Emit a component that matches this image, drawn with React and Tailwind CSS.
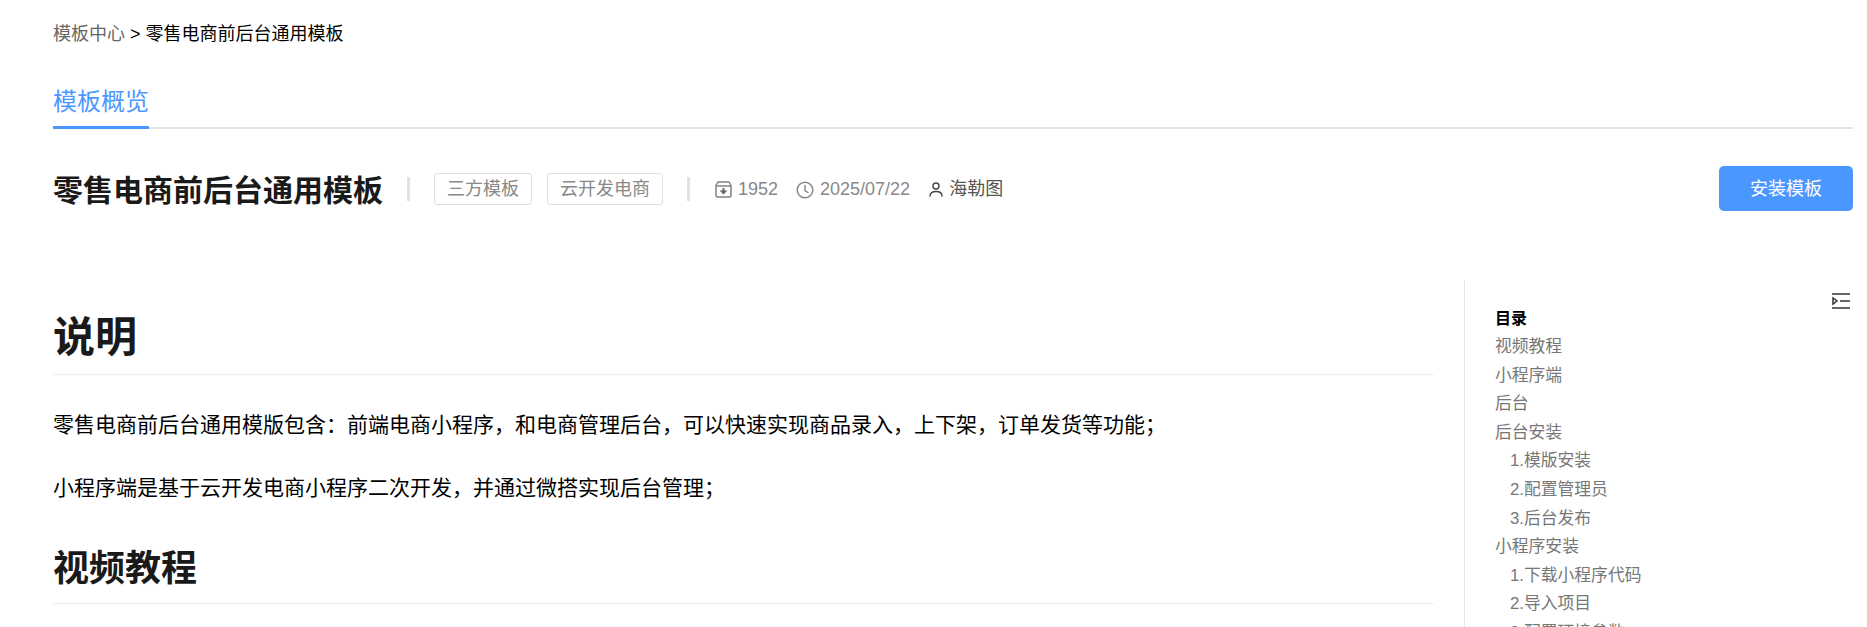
const font = { fontFamily: '"Liberation Sans", "Noto Sans CJK SC", sans-serif' };

const toc = [
  { t: "视频教程" },
  { t: "小程序端" },
  { t: "后台" },
  { t: "后台安装" },
  { t: "1.模版安装", sub: true },
  { t: "2.配置管理员", sub: true },
  { t: "3.后台发布", sub: true },
  { t: "小程序安装" },
  { t: "1.下载小程序代码", sub: true },
  { t: "2.导入项目", sub: true },
  { t: "3.配置环境参数", sub: true },
];

function ArchiveIcon() {
  return (
    <svg width="17" height="17" viewBox="0 0 17 17" fill="none" stroke="#808080" strokeWidth="1.500">
      <path d="M3 1h11l2 3.500V14.500a1.500 1.500 0 0 1-1.500 1.500h-12A1.500 1.500 0 0 1 1 14.500V4.500z" strokeLinejoin="round" />
      <path d="M1 5h15" />
      <path d="M8.500 7v3" strokeWidth="2.500" />
      <path d="M4.500 9.500h8l-4 4z" fill="#666" stroke="none" />
    </svg>
  );
}

function ClockIcon() {
  return (
    <svg width="18" height="18" viewBox="0 0 18 18" fill="none" stroke="#888" strokeWidth="1.500">
      <circle cx="9" cy="9" r="7.800" />
      <path d="M9 4.500V9.500l3 2" strokeLinecap="round" />
    </svg>
  );
}

function UserIcon() {
  return (
    <svg width="14" height="15" viewBox="0 0 14 15" fill="none" stroke="#444" strokeWidth="1.400">
      <circle cx="7" cy="4" r="3" />
      <path d="M1 14c0-3 2.500-4.500 6-4.500s6 1.500 6 4.500" strokeLinecap="round" />
    </svg>
  );
}

function TocIcon() {
  return (
    <svg width="18" height="16" viewBox="0 0 18 16" fill="none" stroke="#333" strokeWidth="1.300">
      <path d="M0 1h18M0 15h18" />
      <path d="M1 5l4 3-4 3z" strokeWidth="1.500" />
      <path d="M8 8h10" strokeWidth="1.500" />
    </svg>
  );
}

export default function App() {
  return (
    <div style={font} className="h-[627px] overflow-hidden bg-white pl-[53px] pr-[14px]">
      {/* Breadcrumb */}
      <div className="pt-[20px] h-[46px] text-[18px] leading-[28px] text-black">
        <span className="text-[#666]">模板中心</span> &gt; 零售电商前后台通用模板
      </div>

      {/* Tab bar */}
      <div className="mt-[10px] h-[73px] flex items-end border-b-2 border-[#e4e4e4]">
        <div className="h-[73px] -mb-[2px] border-b-[3px] border-[#4a98ff] pt-[26px] text-[24px] leading-[40px] text-[#4a98ff]">
          模板概览
        </div>
      </div>

      {/* Template header */}
      <div className="mt-[37px] h-[45px] flex items-center">
        <h1 className="h-[45px] text-[30px] leading-[49px] font-bold text-[#1a1a1a]">零售电商前后台通用模板</h1>
        <div className="ml-[24px] w-[3px] h-[24px] bg-[#e2e2e2]" />
        <span className="ml-[24px] w-[98px] h-[32px] flex items-center justify-center rounded-[3px] border border-[#dcdfe6] pt-[2px] text-[18px] text-[#888]">
          三方模板
        </span>
        <span className="ml-[15px] w-[116px] h-[32px] flex items-center justify-center rounded-[3px] border border-[#dcdfe6] pt-[2px] text-[18px] text-[#888]">
          云开发电商
        </span>
        <div className="ml-[24px] w-[3px] h-[24px] bg-[#e2e2e2]" />
        <div className="ml-[25px] pt-[2px] flex items-center gap-[6px] text-[18px] text-[#888]">
          <ArchiveIcon />
          <span>1952</span>
        </div>
        <div className="ml-[18px] pt-[2px] flex items-center gap-[6px] text-[18px] text-[#888]">
          <ClockIcon />
          <span>2025/07/22</span>
        </div>
        <div className="ml-[19px] pt-[2px] flex items-center gap-[6px] text-[18px] text-[#555]">
          <UserIcon />
          <span>海勒图</span>
        </div>
        <button className="ml-auto w-[134px] h-[45px] rounded-[5px] bg-[#4a98ff] pt-[2px] text-[18px] text-white">
          安装模板
        </button>
      </div>

      {/* Doc body + outline */}
      <div className="mt-[69px] flex">
        <div className="w-[1381px] text-black">
          <h2 className="h-[95px] border-b border-[#eee] pt-[29px] text-[42px] leading-[58px] font-bold text-[#1a1a1a]">
            说明
          </h2>
          <p className="mt-[34px] text-[21px] leading-[32px]">
            零售电商前后台通用模版包含：前端电商小程序，和电商管理后台，可以快速实现商品录入，上下架，订单发货等功能；
          </p>
          <p className="mt-[31px] text-[21px] leading-[32px]">
            小程序端是基于云开发电商小程序二次开发，并通过微搭实现后台管理；
          </p>
          <h2 className="mt-[36px] h-[64px] border-b border-[#eee] pt-[4px] text-[36px] leading-[50px] font-bold text-[#1a1a1a]">
            视频教程
          </h2>
        </div>

        <div className="ml-[30px] flex-1 border-l border-[#e5e5e5] pl-[30px] pr-[3px]">
          <div className="flex justify-end pt-[13px] h-[29px]">
            <TocIcon />
          </div>
          <div className="-mt-[4px] text-[16px] leading-[28px] font-bold text-black">目录</div>
          {toc.map((item) => (
            <div
              key={item.t}
              className={
                item.sub
                  ? "pl-[15px] text-[16.800px] leading-[28.600px] text-[#777]"
                  : "text-[16.800px] leading-[28.600px] text-[#777]"
              }
            >
              {item.t}
            </div>
          ))}
        </div>
      </div>
    </div>
  );
}
